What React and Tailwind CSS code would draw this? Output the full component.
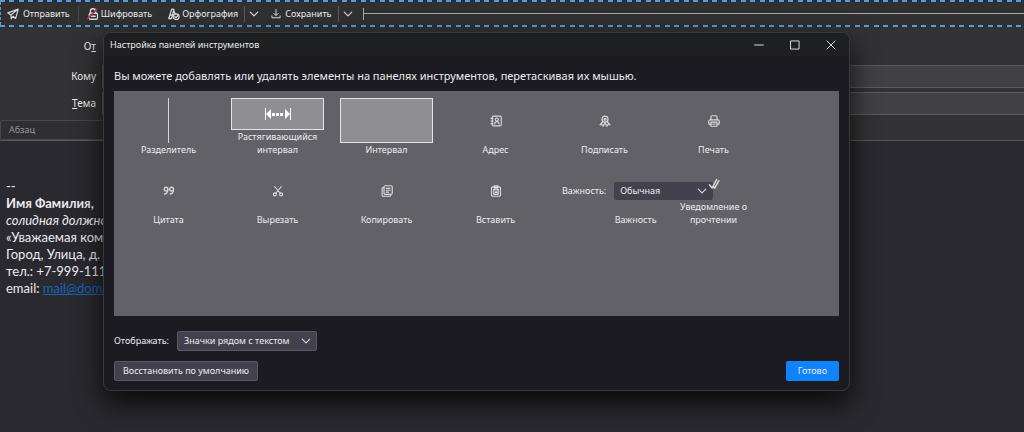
import React, { useState } from "react";
import clsx from "clsx";

const SIGNATURE_LINK = "mail@domain.ru";

const Icon = ({ size = "size-3", children, width = 1.5 }) => (
  <svg
    viewBox="0 0 16 16"
    className={clsx("shrink-0 text-[#dadadc]", size)}
    fill="none"
    stroke="currentColor"
    strokeWidth={width}
    strokeLinecap="round"
    strokeLinejoin="round"
    aria-hidden="true"
  >
    {children}
  </svg>
);

const SendIcon = () => (
  <Icon size="size-3">
    <path d="M15 1.5 1 6.5l4 2.8L15 1.5 11.5 14 8 11l-2.5 3.5V9.5" />
  </Icon>
);

const EncryptIcon = () => (
  <Icon size="size-3" width={1.7}>
    <path d="M4.5 7V4.5a3.5 3.5 0 0 1 7 0V7" />
    <rect x="3" y="7" width="11" height="8" rx="1.5" />
    <path d="M6 11h5" />
    <path d="M1 14 13 2" stroke="#b8324c" strokeWidth="2.2" />
  </Icon>
);

const SpellIcon = () => (
  <Icon size="size-3" width={1.7}>
    <path d="M1 14 5 1.5h2L9.5 8M2.5 9.5H7M1 14h4M5 13l3-11" />
    <circle cx="11" cy="11.5" r="3.8" />
    <path d="m9.3 11.6 1.3 1.3 2.3-2.6" />
  </Icon>
);

const SaveIcon = () => (
  <Icon size="size-2.5" width={1.6}>
    <path d="M8 1v9M4.5 7 8 10.5 11.5 7M1.5 11v3h13v-3" />
  </Icon>
);

const ChevronIcon = () => (
  <Icon size="size-2.5" width={1.8}>
    <path d="m2 5 6 6 6-6" />
  </Icon>
);

const StretchIcon = () => (
  <svg viewBox="0 0 28 12" className="h-3 w-7" fill="#fff" aria-hidden="true">
    <path d="M1 0h1v12H1zM26 0h1v12h-1zM2 6l5-5v10zM26 6l-5-5v10zM8 5h3v3H8zM12 5h3v3h-3zM16 5h3v3h-3z" />
  </svg>
);

const AddressIcon = () => (
  <Icon>
    <rect x="3" y="1.5" width="12" height="13" rx="1.5" />
    <path d="M1.5 4.5H4M1.5 8H4M1.5 11.5H4M6.5 12v-1.5c0-1.2 1-1.7 2.7-1.7s2.6.5 2.6 1.7V12" />
    <circle cx="9.2" cy="6" r="2" />
  </Icon>
);

const SignIcon = () => (
  <Icon width={1.6}>
    <circle cx="8" cy="5.5" r="4" />
    <circle cx="8" cy="5.5" r="1.2" />
    <path d="M5 9 1.5 13h3l1 2L8 10.5l2.5 4.5 1-2h3L11 9" />
  </Icon>
);

const PrintIcon = () => (
  <Icon width={1.6}>
    <path d="M4 6.5v-4A1.5 1.5 0 0 1 5.5 1h5A1.5 1.5 0 0 1 12 2.5v4M3.5 12.5h-1A1.5 1.5 0 0 1 1 11V8.5a2 2 0 0 1 2-2h10a2 2 0 0 1 2 2V11a1.5 1.5 0 0 1-1.5 1.5h-1" />
    <path d="M4 9.5h8V15H4zM6.5 12h3" />
  </Icon>
);

const QuoteIcon = () => (
  <Icon width={1.7}>
    <circle cx="4" cy="5.5" r="2.5" />
    <path d="M6.5 5.5c0 3.5-1.5 6-4.5 6.500" />
    <circle cx="11.5" cy="5.5" r="2.5" />
    <path d="M14 5.5c0 3.5-1.5 6-4.5 6.500" />
  </Icon>
);

const CutIcon = () => (
  <Icon>
    <path d="M3.5 2 11 11M12.5 2 5 11" />
    <circle cx="3.8" cy="12.5" r="2" />
    <circle cx="12.2" cy="12.5" r="2" />
  </Icon>
);

const CopyIcon = () => (
  <Icon>
    <rect x="4" y="1" width="11" height="11.5" rx="1.5" />
    <path d="M4 3.5H3A1.5 1.5 0 0 0 1.5 5v8.5A1.5 1.5 0 0 0 3 15h8.5a1.5 1.5 0 0 0 1.5-1.5v-1M7 4.5h5M7 7h5M7 9.5h3" />
  </Icon>
);

const PasteIcon = () => (
  <Icon>
    <rect x="2" y="2.5" width="12" height="12.5" rx="1.5" />
    <path d="M5.5 1h5v2.5h-5zM5 5.5h6v7H5zM7 8h2.5M7 10h2.5" />
  </Icon>
);

const ReceiptIcon = () => (
  <Icon width={2}>
    <path d="m2 9 3.500 4.5L11.5 2M7.5 11.5l1.500 2L14.500 3.500" />
  </Icon>
);

function SelectBox({ id, options, className }) {
  const [value, setValue] = useState(options[0]);

  return (
    <div className="relative flex">
      <select
        id={id}
        value={value}
        onChange={(e) => setValue(e.target.value)}
        className={clsx("appearance-none rounded-xs pl-1.5 pr-5", className)}
      >
        {options.map((option) => (
          <option key={option}>{option}</option>
        ))}
      </select>
      <span className="pointer-events-none absolute inset-y-0 right-1.5 flex items-center">
        <ChevronIcon />
      </span>
    </div>
  );
}

const PrioritySelect = () => (
  <div className="flex items-center gap-2 pl-1">
    <label htmlFor="priority">Важность:</label>
    <SelectBox id="priority" options={["Обычная", "Высокая", "Низкая"]} className="h-[18px] w-[99px] bg-[#42414d]" />
  </div>
);

const PALETTE_ITEMS = [
  { label: "Разделитель", graphic: <div className="w-px self-stretch bg-[#d4d4d6]" /> },
  {
    label: "Растягивающийся интервал",
    graphic: (
      <div className="flex w-full items-center justify-center self-stretch border border-[#e4e4e6] bg-[#8f8f93]">
        <StretchIcon />
      </div>
    ),
  },
  {
    label: "Интервал",
    graphic: <div className="w-full self-stretch border border-[#e4e4e6] bg-[#8f8f93]" />,
  },
  { label: "Адрес", graphic: <AddressIcon /> },
  { label: "Подписать", graphic: <SignIcon /> },
  { label: "Печать", graphic: <PrintIcon /> },
  { label: "Цитата", graphic: <QuoteIcon /> },
  { label: "Вырезать", graphic: <CutIcon /> },
  { label: "Копировать", graphic: <CopyIcon /> },
  { label: "Вставить", graphic: <PasteIcon /> },
  { label: "Важность", graphic: <PrioritySelect />, wide: true },
  { label: "Уведомление о прочтении", graphic: <ReceiptIcon /> },
];

// The priority item is wider than its cell, so its neighbour is stacked above it
const PaletteItem = ({ label, graphic, wide }) => (
  <li className={clsx("relative h-[58px] w-[109px] px-2", wide ? "z-0" : "pointer-events-none z-10")}>
    <div className={clsx("flex h-full flex-col items-center", wide ? "w-max" : "w-full")}>
      <div className="flex w-full grow items-center justify-center">{graphic}</div>
      <span className="text-center leading-[13px]">{label}</span>
    </div>
  </li>
);

const Dashes = () => (
  <div className="h-0.5 bg-[repeating-linear-gradient(90deg,#5b9bd0_0_5px,#1d3048_5px_9px,#5b9bd0_9px_14px,#1d3048_14px_19px)]" />
);

const Toolbar = () => (
  <header className="bg-[#303031]">
    <Dashes />
    <div className="flex h-[23px] items-center border-l border-dashed border-[#5b9bd0] pl-1.5 whitespace-nowrap">
      <button className="flex items-center gap-1">
        <SendIcon />
        Отправить
      </button>
      <div className="ml-2 h-4 w-px bg-[#47474a]" />
      <button className="ml-2 flex items-center gap-0.5">
        <EncryptIcon />
        Шифровать
      </button>
      <button className="ml-4 flex items-center gap-0.5">
        <SpellIcon />
        Орфография
      </button>
      <div className="ml-1.5 h-4 w-px bg-[#5a5a5d]" />
      <button className="ml-1" aria-label="Параметры орфографии">
        <ChevronIcon />
      </button>
      <button className="ml-3 flex items-center gap-1">
        <SaveIcon />
        Сохранить
      </button>
      <div className="ml-1.5 h-4 w-px bg-[#5a5a5d]" />
      <button className="ml-1" aria-label="Параметры сохранения">
        <ChevronIcon />
      </button>
      <div className="ml-2.5 flex h-3 grow items-center border-l border-[#a8a8aa]">
        <div className="h-px grow bg-[#a8a8aa]" />
      </div>
    </div>
    <Dashes />
  </header>
);

const HeaderField = ({ id, label }) => (
  <div className="flex items-center">
    <label htmlFor={id} className="w-[102px] shrink-0 pr-1.5 text-right text-[10px]">
      {label}
    </label>
    <input id={id} className="h-[23px] min-w-0 grow border border-r-0 border-[#5c5c5f] bg-[#414143] px-2" />
  </div>
);

const Composer = () => (
  <main>
    <div className="flex flex-col bg-[#323234] pb-1">
      <div className="flex h-[38px] items-center">
        <span className="w-[102px] pr-1.5 text-right text-[10px]">
          О<u>т</u>
        </span>
      </div>
      <div className="flex flex-col gap-1">
        <HeaderField id="to" label="Кому" />
        <HeaderField
          id="subject"
          label={
            <>
              <u>Т</u>ема
            </>
          }
        />
      </div>
    </div>
    <div className="flex h-[22px] items-center border-b border-[#5a5a5d] bg-[#323234]">
      <select
        aria-label="Стиль абзаца"
        className="h-5 w-40 appearance-none rounded-xs border border-[#48484b] bg-[#2f2f31] pl-2 text-[#98989c]"
      >
        <option>Абзац</option>
      </select>
    </div>
    <div className="px-1.5 pt-[37px] font-[Lato,'Noto_Sans',sans-serif] text-[13px] leading-[17px]">
      <p>--</p>
      <p className="font-bold">Имя Фамилия,</p>
      <p className="italic">солидная должность</p>
      <p>«Уважаемая компания»</p>
      <p>Город, Улица, д. 1</p>
      <p>тел.: +7-999-111-22-33</p>
      <p>
        email:{" "}
        <a href={`mailto:${SIGNATURE_LINK}`} className="text-[#1565b8] underline">
          {SIGNATURE_LINK}
        </a>
      </p>
    </div>
  </main>
);

const CustomizeDialog = () => (
  <div className="absolute inset-x-0 top-8 pr-[174px] pl-[103px]">
    <section
      role="dialog"
      aria-labelledby="dialog-title"
      className="overflow-hidden rounded-lg border border-[#3a3a3d] bg-[#1c1b22] shadow-[0_12px_28px_rgba(0,0,0,0.8)]"
    >
      <div className="flex h-[23px] items-center bg-[#1e1f21] pl-1.5">
        <h1 id="dialog-title" className="grow">
          Настройка панелей инструментов
        </h1>
        <button aria-label="Свернуть" className="flex w-9 justify-center">
          <Icon size="size-2.5" width={1.6}>
            <path d="M1 8h14" />
          </Icon>
        </button>
        <button aria-label="Развернуть" className="flex w-9 justify-center">
          <Icon size="size-2.5" width={1.6}>
            <rect x="1.5" y="1.5" width="13" height="13" />
          </Icon>
        </button>
        <button aria-label="Закрыть" className="flex w-9 justify-center">
          <Icon size="size-2.5" width={1.6}>
            <path d="m1.5 1.5 13 13m0-13-13 13" />
          </Icon>
        </button>
      </div>
      <div className="px-2.5 pb-[9px]">
        <h2 className="flex h-[35px] items-center pt-1.5 text-[11px]">
          Вы можете добавлять или удалять элементы на панелях инструментов, перетаскивая их мышью.
        </h2>
        <ul className="flex min-h-[225px] flex-wrap content-start gap-y-3 bg-[#626167] pt-[7px]">
          {PALETTE_ITEMS.map((item) => (
            <PaletteItem key={item.label} {...item} />
          ))}
        </ul>
        <div className="mt-[15px] flex items-center gap-2">
          <label htmlFor="display-mode">Отображать:</label>
          <SelectBox
            id="display-mode"
            options={["Значки рядом с текстом", "Значки и текст", "Значки", "Текст"]}
            className="h-5 w-[140px] border border-[#5b5a64] bg-[#42414d]"
          />
        </div>
        <div className="mt-2.5 flex justify-between">
          <button className="h-5 rounded-xs border border-[#5b5a64] bg-[#42414d] px-2">
            Восстановить по умолчанию
          </button>
          <button className="h-5 rounded-xs bg-[#0f83fb] px-3">Готово</button>
        </div>
      </div>
    </section>
  </div>
);

export default function App() {
  return (
    <div className="relative min-h-screen overflow-hidden bg-[#2a292f] font-['Noto_Sans','Open_Sans',sans-serif] text-[9px] text-[#ececee]">
      <Toolbar />
      <Composer />
      <CustomizeDialog />
    </div>
  );
}
